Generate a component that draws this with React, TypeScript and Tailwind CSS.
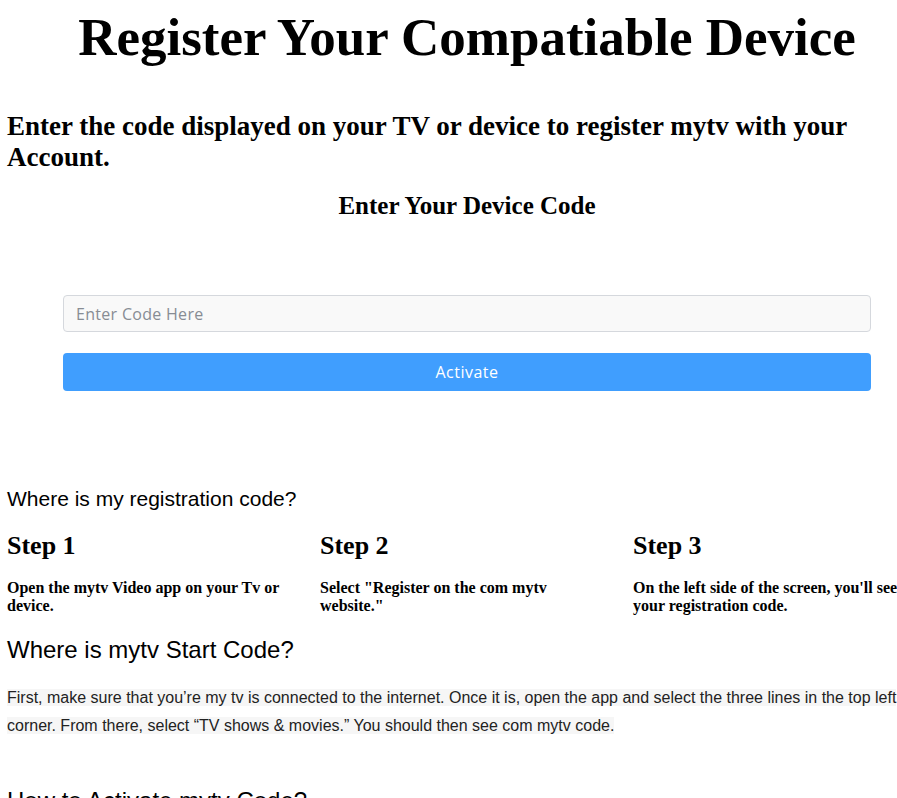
import { useState } from 'react';

const serif = "font-['Liberation_Serif','DejaVu_Serif',serif]";
const sans = "font-['Liberation_Sans',Arial,sans-serif]";

const steps = [
  { title: 'Step 1', text: 'Open the mytv Video app on your Tv or device.' },
  { title: 'Step 2', text: 'Select "Register on the com mytv website."' },
  { title: 'Step 3', text: "On the left side of the screen, you'll see your registration code." },
];

export default function App() {
  const [code, setCode] = useState('');

  return (
    <div className="w-full overflow-hidden bg-white text-black">
      <main className="w-[934px] px-[7px]">
        <h1 className={`${serif} pt-[7px] text-center text-[53px] font-bold leading-[60px]`}>
          Register Your Compatiable Device
        </h1>

        <h2 className={`${serif} mt-[44px] text-[27px] font-bold leading-[31px]`}>
          Enter the code displayed on your TV or device to register mytv with your Account.
        </h2>
        <h3 className={`${serif} mt-[18px] text-center text-[25px] font-bold leading-[30px]`}>
          Enter Your Device Code
        </h3>

        <form className="mx-[56px] mt-[74px] flex flex-col gap-[21px]" onSubmit={(e) => e.preventDefault()}>
          <input
            value={code}
            onChange={(e) => setCode(e.target.value)}
            placeholder="Enter Code Here"
            className="h-[37px] w-full rounded-[4px] border border-[#d5d8dd] bg-[#f9f9f9] px-[12px] font-['Open_Sans',sans-serif] text-[16px] tracking-[0.3px] text-[#333] placeholder:text-[#878c94] focus:outline-none"
          />
          <button
            type="submit"
            className="h-[38px] w-full rounded-[4px] bg-[#409efe] font-['Open_Sans',sans-serif] text-[16px] tracking-[0.5px] text-white"
          >
            Activate
          </button>
        </form>

        <section className="mt-[96px]">
          <h4 className={`${sans} text-[21px] leading-[24px]`}>Where is my registration code?</h4>
          <div className="mt-[19px] grid grid-cols-[313px_313px_313px]">
            {steps.map((step) => (
              <div key={step.title} className="pr-[28px]">
                <h5 className={`${serif} text-[26px] font-bold leading-[32px]`}>{step.title}</h5>
                <p className={`${serif} mt-[17px] text-[16px] font-bold leading-[18px]`}>{step.text}</p>
              </div>
            ))}
          </div>
        </section>

        <section className="mt-[21px]">
          <h4 className={`${sans} text-[24px] leading-[28px]`}>Where is mytv Start Code?</h4>
          <p className={`${sans} mt-[20px] text-[16px] leading-[28px] text-[#222]`}>
            <span className="bg-[#f6f6f6]">
              First, make sure that you’re my tv is connected to the internet. Once it is, open the app and select the three lines in the top left corner. From there, select “TV shows &amp; movies.” You should then see com mytv code.
            </span>
          </p>
        </section>

        <section className="mt-[47px] pb-[40px]">
          <h4 className={`${sans} text-[24px] leading-[28px]`}>How to Activate mytv Code?</h4>
        </section>
      </main>
    </div>
  );
}
